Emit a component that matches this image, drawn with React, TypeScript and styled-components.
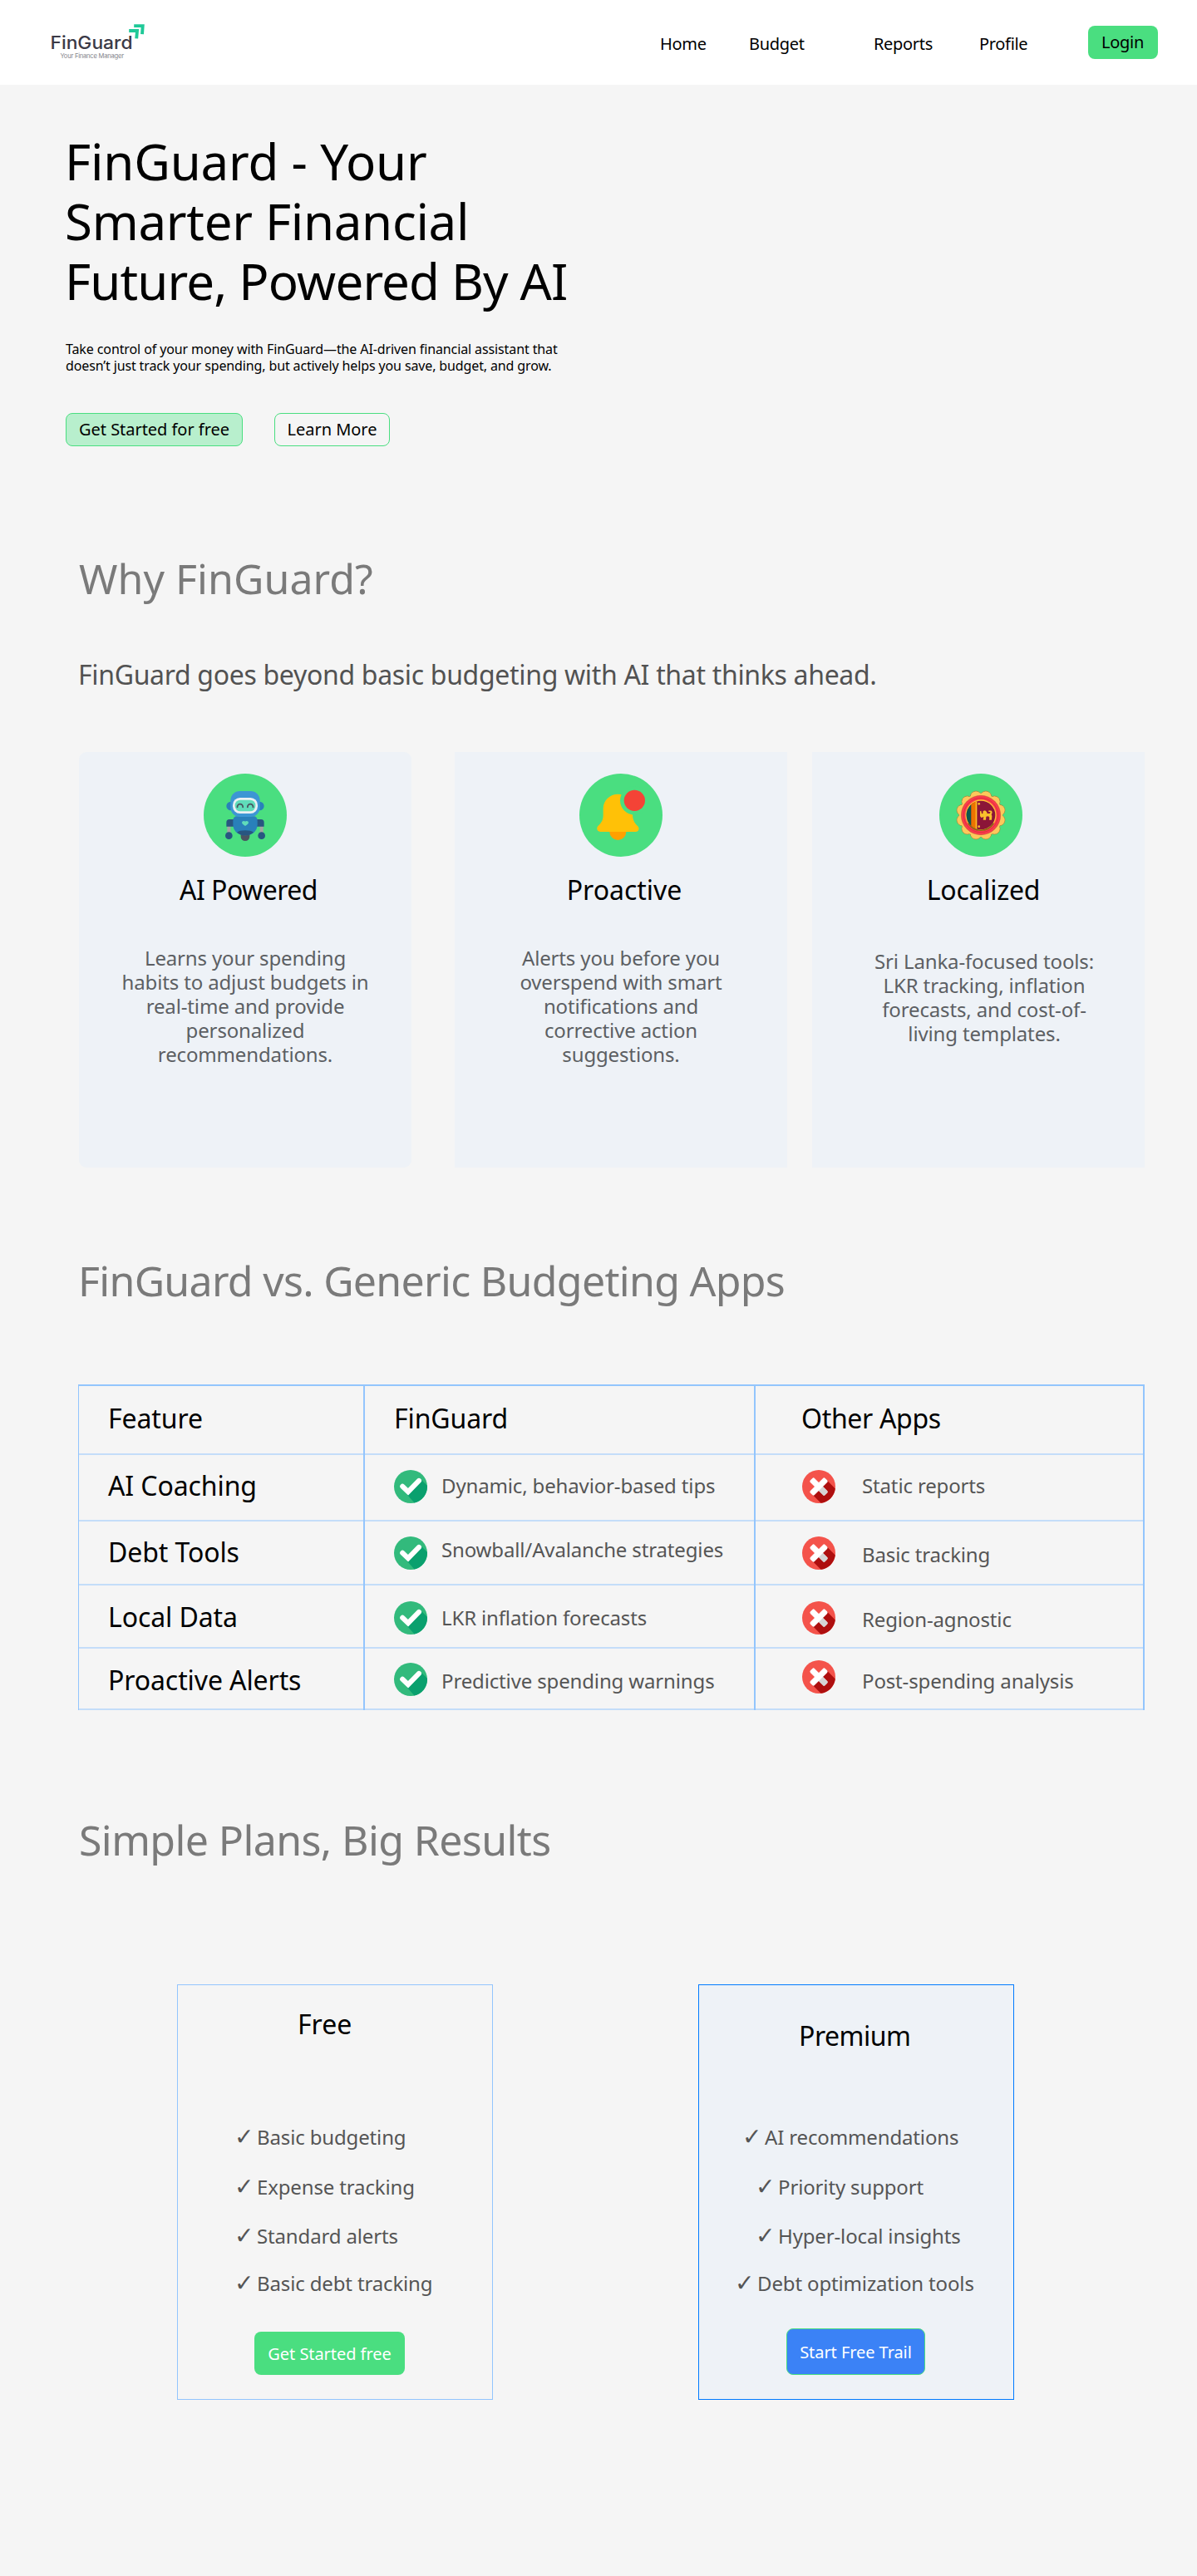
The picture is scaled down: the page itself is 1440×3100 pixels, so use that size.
import React from "react";
import styled, { createGlobalStyle } from "styled-components";

const GlobalStyle = createGlobalStyle`
  *, *::before, *::after { box-sizing: border-box; }
  body {
    margin: 0;
    background: #f5f5f5;
    color: #000;
    font-family: "Noto Sans", "Open Sans", sans-serif;
  }
  h1, h2, h3, p, ul { margin: 0; padding: 0; font-weight: 400; }
  button { font-family: inherit; padding: 0; cursor: pointer; }
`;

const Page = styled.div`
  width: 1440px;
  min-height: 3100px;
  background: #f5f5f5;
`;

/* ---------- header ---------- */

const Header = styled.header`
  display: flex;
  align-items: flex-start;
  height: 102px;
  padding-left: 60px;
  background: #fff;
`;

const Logo = styled.svg`
  display: block;
  flex: none;
  margin-top: 26px;
`;

const Nav = styled.nav`
  display: grid;
  grid-template-columns: 107px 150px 127px 131px;
  margin: 41px 0 0 618px;
`;

const NavLink = styled.a`
  font-size: 20px;
  line-height: 24px;
  letter-spacing: -0.016em;
  color: #000;
`;

const LoginButton = styled.button`
  width: 84px;
  height: 40px;
  margin-top: 31px;
  padding: 0 1px 1px 0;
  border: 0;
  border-radius: 8px;
  background: #4ade80;
  color: #000;
  font-size: 20px;
  letter-spacing: -0.012em;
`;

/* ---------- hero ---------- */

const Hero = styled.section`
  padding: 56px 0 0 79px;
`;

const HeroTitle = styled.h1`
  margin-left: -1px;
  font-size: 60px;
  line-height: 72px;
`;

const Line = styled.span<{ $track?: number }>`
  display: block;
  white-space: nowrap;
  letter-spacing: ${(p) => p.$track ?? 0}em;
`;

const HeroText = styled.p`
  margin-top: 36px;
  font-size: 16px;
  line-height: 20px;
`;

const HeroActions = styled.div`
  display: flex;
  gap: 38px;
  margin-top: 47px;
`;

const HeroButton = styled.button<{ $width: number; $filled?: boolean }>`
  width: ${(p) => p.$width}px;
  height: 40px;
  padding-bottom: 2px;
  border: 1px solid #4ade80;
  border-radius: 8px;
  background: ${(p) => (p.$filled ? "#b8efcd" : "transparent")};
  color: #000;
  font-size: 20px;
  letter-spacing: -0.002em;
`;

/* ---------- shared section text ---------- */

const SectionTitle = styled.h2<{ $top: number; $track: number; $left?: number }>`
  padding-top: ${(p) => p.$top}px;
  margin-left: ${(p) => p.$left ?? 95}px;
  font-size: 50px;
  line-height: 60px;
  letter-spacing: ${(p) => p.$track}em;
  color: #7a7a7a;
`;

const SectionLead = styled.p`
  margin: 66px 0 0 94px;
  font-size: 32px;
  line-height: 40px;
  letter-spacing: -0.01em;
  color: #525252;
`;

/* ---------- feature cards ---------- */

const FeatureRow = styled.div`
  display: flex;
  margin: 73px 0 0 95px;
`;

const FeatureCard = styled.article<{ $gap?: number; $radius?: number }>`
  display: flex;
  flex-direction: column;
  align-items: center;
  width: 400px;
  height: 500px;
  margin-left: ${(p) => p.$gap ?? 0}px;
  padding-top: 26px;
  border-radius: ${(p) => p.$radius ?? 0}px;
  background: #eef2f7;
`;

const IconDisc = styled.div<{ $shift?: number }>`
  width: 100px;
  height: 100px;
  margin-left: ${(p) => (p.$shift ?? 0) * 2}px;
  border-radius: 50%;
  background: #4ade80;
  svg { display: block; }
`;

const FeatureTitle = styled.h3<{ $shift: number; $track: number }>`
  margin-top: 20px;
  margin-left: ${(p) => p.$shift * 2}px;
  font-size: 32px;
  line-height: 40px;
  letter-spacing: ${(p) => p.$track}em;
`;

const FeatureText = styled.p<{ $shift?: number; $top: number }>`
  margin-top: ${(p) => p.$top}px;
  margin-left: ${(p) => (p.$shift ?? 0) * 2}px;
  font-size: 24px;
  line-height: 29.1px;
  text-align: center;
  color: #5c5f63;
`;

/* ---------- comparison table ---------- */

const Table = styled.div`
  width: 1283px;
  margin: 95px 0 0 94px;
  border-top: 2px solid #93c5fd;
  border-left: 1px solid #93c5fd;
`;

const TableRow = styled.div<{ $height: number }>`
  display: grid;
  grid-template-columns: 344px 470px 468px;
  height: ${(p) => p.$height}px;
`;

const Cell = styled.div<{ $left: number }>`
  display: flex;
  align-items: flex-start;
  padding-left: ${(p) => p.$left}px;
  border-right: 2px solid #93c5fd;
  box-shadow: inset 0 -2px 0 #c4ddf9;
`;

const CellLabel = styled.span<{ $top: number; $track?: number }>`
  margin-top: ${(p) => p.$top}px;
  font-size: 32px;
  line-height: 40px;
  letter-spacing: ${(p) => p.$track ?? -0.003}em;
`;

const CellIcon = styled.svg<{ $top: number }>`
  flex: none;
  margin-top: ${(p) => p.$top}px;
`;

const CellText = styled.span<{ $top: number; $gap: number }>`
  margin-top: ${(p) => p.$top}px;
  margin-left: ${(p) => p.$gap}px;
  font-size: 24px;
  line-height: 30px;
  letter-spacing: -0.006em;
  white-space: nowrap;
  color: #555;
`;

/* ---------- plans ---------- */

const PlanRow = styled.div`
  display: flex;
  gap: 247px;
  margin: 144px 0 0 213px;
`;

const PlanCard = styled.article<{ $premium?: boolean }>`
  display: flex;
  flex-direction: column;
  align-items: flex-start;
  width: 380px;
  height: 500px;
  border: 1px solid ${(p) => (p.$premium ? "#007aff" : "#93c5fd")};
  background: ${(p) => (p.$premium ? "#eef2f7" : "transparent")};
`;

const PlanTitle = styled.h3<{ $top: number; $left: number; $track?: number }>`
  margin: ${(p) => p.$top}px 0 0 ${(p) => p.$left}px;
  font-size: 32px;
  line-height: 40px;
  letter-spacing: ${(p) => p.$track ?? 0}em;
`;

const PlanList = styled.ul<{ $top: number }>`
  display: grid;
  grid-template-rows: 60px 59px 57px 30px;
  margin-top: ${(p) => p.$top}px;
  list-style: none;
`;

const PlanItem = styled.li<{ $left: number }>`
  display: flex;
  padding-left: ${(p) => p.$left}px;
  font-size: 24px;
  line-height: 30px;
  letter-spacing: -0.006em;
  white-space: nowrap;
  color: #555;
`;

const Tick = styled.span`
  width: 27px;
  font-family: "DejaVu Sans", sans-serif;
  font-size: 28px;
`;

const PlanButton = styled.button<{ $premium?: boolean }>`
  width: ${(p) => (p.$premium ? 167 : 181)}px;
  height: ${(p) => (p.$premium ? 56 : 52)}px;
  margin: ${(p) => (p.$premium ? "39px 0 0 105px" : "43px 0 0 92px")};
  border: ${(p) => (p.$premium ? "1px solid #4ade80" : "0")};
  border-radius: 8px;
  background: ${(p) => (p.$premium ? "#3b82f6" : "#4ade80")};
  color: #fff;
  font-size: 20px;
  letter-spacing: -0.003em;
`;

/* ---------- drawings ---------- */

const FinGuardLogo = () => (
  <Logo width="116" height="50" viewBox="60 26 116 50">
    <text x="60.5" y="59" fontSize="21.6" fontWeight="500" fontFamily="Inter, sans-serif" fill="#3b3a47" textLength="99" lengthAdjust="spacingAndGlyphs">
      FinGuard
    </text>
    <text x="72.5" y="70" fontSize="7.6" fontFamily="Inter, sans-serif" fill="#85858b" textLength="76.5">
      Your Finance Manager
    </text>
    <g fill="none" stroke="#1fc998" strokeWidth="3.9" strokeLinejoin="miter" strokeLinecap="butt">
      <path d="M161.2 31.100H171.700L171 41.200" />
      <path d="M155.200 37H165L164.200 46.400" />
    </g>
  </Logo>
);

const RobotIcon = () => (
  <svg width="100" height="100" viewBox="0 0 300 300">
    <circle cx="98" cy="117" r="16" fill="#2980ba" />
    <circle cx="202" cy="117" r="16" fill="#2980ba" />
    <rect x="85" y="187" width="12" height="30" fill="#a5a5a4" />
    <rect x="203" y="187" width="12" height="30" fill="#a5a5a4" />
    <path d="M110 165H93a11 11 0 0 0-11 11v15h28zM190 165h17a11 11 0 0 1 11 11v15h-28z" fill="#285680" />
    <circle cx="91" cy="224" r="13" fill="#285680" />
    <circle cx="209" cy="224" r="13" fill="#285680" />
    <path d="M134 214h32v13a16 16 0 0 1-32 0z" fill="#4b5460" />
    <path d="M122 154h56q16 0 16 16v14q0 20-16 31-12 8-28 8t-28-8q-16-11-16-31v-14q0-16 16-16z" fill="#2980ba" />
    <path d="M120 212q10-7 30-7t30 7q-12 11-30 11t-30-11z" fill="#285680" />
    <rect x="97" y="63" width="106" height="93" rx="34" fill="#3c96d4" />
    <rect x="105" y="87" width="90" height="57" rx="26" fill="#ebf0f3" />
    <rect x="113" y="95" width="74" height="41" rx="19" fill="#60dcba" />
    <path d="M121.500 121a10 11 0 0 1 20 0M158.500 121a10 11 0 0 1 20 0" fill="none" stroke="#4b5460" strokeWidth="5.500" strokeLinecap="round" />
    <path d="M145 171q5 0 5 3 0-3 5-3 7 0 7 6 0 4-12 12-12-8-12-12 0-6 7-6z" fill="#60dcba" />
  </svg>
);

const BellIcon = () => (
  <svg width="100" height="100" viewBox="0 0 300 300">
    <circle cx="139" cy="210" r="30" fill="#ffa000" />
    <path
      d="M139 74C110 74 86 97 86 126V150C86 170 77 180 68 188C60 196 63 210 76 210H202C215 210 218 196 210 189C200 180 192 168 192 148V126C192 97 168 74 139 74Z"
      fill="#ffc107"
    />
    <circle cx="199" cy="97" r="52" fill="#4ade80" />
    <circle cx="199" cy="97" r="38" fill="#f44336" />
  </svg>
);

const petals = Array.from({ length: 12 }, (_, i) => {
  const a = ((i * 30 + 15) * Math.PI) / 180;
  return { x: 150 + 69 * Math.cos(a), y: 150 + 69 * Math.sin(a) };
});

const SriLankaIcon = () => (
  <svg width="100" height="100" viewBox="0 0 300 300">
    <defs>
      <clipPath id="flag">
        <circle cx="150" cy="150" r="52" />
      </clipPath>
    </defs>
    {petals.map((p, i) => (
      <circle key={i} cx={p.x} cy={p.y} r="20" fill="#fdc85c" stroke="#a08a3c" strokeWidth="3" />
    ))}
    {petals.map((p, i) => (
      <circle key={i} cx={p.x} cy={p.y} r="19" fill="#fdc85c" />
    ))}
    <circle cx="150" cy="150" r="78" fill="#fdc85c" />
    <circle cx="150" cy="150" r="71" fill="#fb3a4c" stroke="#b8532f" strokeWidth="1.500" />
    <circle cx="150" cy="150" r="62" fill="none" stroke="#e0303f" strokeWidth="3" />
    <circle cx="150" cy="150" r="56" fill="#ffc233" />
    <g clipPath="url(#flag)">
      <rect x="96" y="96" width="108" height="108" fill="#8b1538" />
      <rect x="96" y="96" width="19" height="108" fill="#0b5a50" />
      <rect x="115" y="96" width="17" height="108" fill="#eb7400" />
      <rect x="131" y="96" width="5" height="108" fill="#ffbe29" />
      <path d="M147 136l4-2 2 11 4-1 1-9 7-2 6 5 2 6h9l3-5-8-2 2-4 10 1 2 7-3 6 2 6-1 14h-9l1-9-4-4-8 1-1 12h-10l2-11-8 3-5-5z" fill="#f9c02c" />
      <circle cx="143" cy="109" r="4" fill="#f9c02c" />
      <circle cx="143" cy="191" r="4" fill="#f9c02c" />
    </g>
    <path d="M104 179a54 54 0 0 0 92 0" fill="none" stroke="#8a6312" strokeWidth="5" />
  </svg>
);

const CheckIcon = ({ top }: { top: number }) => (
  <CellIcon $top={top} width="40" height="40" viewBox="0 0 40 40">
    <circle cx="20" cy="20" r="20" fill="#32ba7c" />
    <path d="M32.500 11.500L39.950 18.700A20 20 0 0 1 24.500 39.500L16 30Z" fill="#0aa06e" />
    <path d="M10.200 19.800L17 26.200L30 12.900" fill="none" stroke="#fff" strokeWidth="6" strokeLinecap="round" strokeLinejoin="miter" />
  </CellIcon>
);

const CrossIcon = ({ top }: { top: number }) => (
  <CellIcon $top={top} width="40" height="40" viewBox="0 0 40 40">
    <circle cx="20" cy="20" r="20" fill="#f4534b" />
    <path d="M29.500 12L39.800 22.600A20 20 0 0 1 22.500 39.850L12 29.300Z" fill="#ae0f0f" />
    <rect x="7.500" y="16.500" width="25" height="7" rx="1.800" transform="rotate(45 20 20)" fill="#fff" />
    <path d="M20 20L22.500 17.500L30.200 25.200Q31.200 26.300 30.200 27.300L27.300 30.200Q26.300 31.200 25.200 30.200L17.500 22.500Z" fill="#d5d5d5" />
    <rect x="7.500" y="16.500" width="25" height="7" rx="1.800" transform="rotate(-45 20 20)" fill="#fff" />
  </CellIcon>
);

/* ---------- data ---------- */

const rows = [
  { h: 80, label: "AI Coaching", lTop: 17, good: "Dynamic, behavior-based tips", gi: 18, gt: 22, bad: "Static reports", bi: 18, bt: 22 },
  { h: 77, label: "Debt Tools", lTop: 17, good: "Snowball/Avalanche strategies", gi: 18, gt: 19, bad: "Basic tracking", bi: 18, bt: 25 },
  { h: 76, label: "Local Data", lTop: 18, good: "LKR inflation forecasts", gi: 19, gt: 24, bad: "Region-agnostic", bi: 19, bt: 26 },
  { h: 74, label: "Proactive Alerts", lTop: 18, good: "Predictive spending warnings", gi: 17, gt: 24, bad: "Post-spending analysis", bi: 14, bt: 24 },
];

const freeItems = [
  { text: "Basic budgeting", left: 68 },
  { text: "Expense tracking", left: 68 },
  { text: "Standard alerts", left: 68 },
  { text: "Basic debt tracking", left: 68 },
];

const premiumItems = [
  { text: "AI recommendations", left: 52 },
  { text: "Priority support", left: 68 },
  { text: "Hyper-local insights", left: 68 },
  { text: "Debt optimization tools", left: 43 },
];

const Lines = ({ of }: { of: string[] }) => (
  <>
    {of.map((l) => (
      <Line key={l} $track={-0.006}>{l}</Line>
    ))}
  </>
);

export default function App() {
  return (
    <Page>
      <GlobalStyle />
      <Header>
        <FinGuardLogo />
        <Nav>
          <NavLink>Home</NavLink>
          <NavLink>Budget</NavLink>
          <NavLink>Reports</NavLink>
          <NavLink>Profile</NavLink>
        </Nav>
        <LoginButton>Login</LoginButton>
      </Header>

      <Hero>
        <HeroTitle>
          <Line $track={-0.003}>FinGuard - Your</Line>
          <Line $track={-0.005}>Smarter Financial</Line>
          <Line $track={-0.014}>Future, Powered By AI</Line>
        </HeroTitle>
        <HeroText>
          <Line $track={-0.007}>Take control of your money with FinGuard—the AI-driven financial assistant that</Line>
          <Line $track={-0.008}>doesn’t just track your spending, but actively helps you save, budget, and grow.</Line>
        </HeroText>
        <HeroActions>
          <HeroButton $width={213} $filled>Get Started for free</HeroButton>
          <HeroButton $width={139}>Learn More</HeroButton>
        </HeroActions>
      </Hero>

      <section>
        <SectionTitle $top={129} $track={0.001}>Why FinGuard?</SectionTitle>
        <SectionLead>FinGuard goes beyond basic budgeting with AI that thinks ahead.</SectionLead>
        <FeatureRow>
          <FeatureCard $radius={9}>
            <IconDisc><RobotIcon /></IconDisc>
            <FeatureTitle $shift={4} $track={-0.016}>AI Powered</FeatureTitle>
            <FeatureText $top={47}>
              <Lines of={["Learns your spending", "habits to adjust budgets in", "real-time and provide", "personalized", "recommendations."]} />
            </FeatureText>
          </FeatureCard>
          <FeatureCard $gap={52}>
            <IconDisc><BellIcon /></IconDisc>
            <FeatureTitle $shift={4} $track={-0.001}>Proactive</FeatureTitle>
            <FeatureText $top={47}>
              <Lines of={["Alerts you before you", "overspend with smart", "notifications and", "corrective action", "suggestions."]} />
            </FeatureText>
          </FeatureCard>
          <FeatureCard $gap={30}>
            <IconDisc $shift={3}><SriLankaIcon /></IconDisc>
            <FeatureTitle $shift={6} $track={-0.008}>Localized</FeatureTitle>
            <FeatureText $top={51} $shift={7}>
              <Lines of={["Sri Lanka-focused tools:", "LKR tracking, inflation", "forecasts, and cost-of-", "living templates."]} />
            </FeatureText>
          </FeatureCard>
        </FeatureRow>
      </section>

      <section>
        <SectionTitle $top={106} $track={-0.014} $left={94}>FinGuard vs. Generic Budgeting Apps</SectionTitle>
        <Table>
          <TableRow $height={83}>
            <Cell $left={35}><CellLabel $top={19}>Feature</CellLabel></Cell>
            <Cell $left={35}><CellLabel $top={19}>FinGuard</CellLabel></Cell>
            <Cell $left={55}><CellLabel $top={19} $track={-0.01}>Other Apps</CellLabel></Cell>
          </TableRow>
          {rows.map((r) => (
            <TableRow key={r.label} $height={r.h}>
              <Cell $left={35}><CellLabel $top={r.lTop}>{r.label}</CellLabel></Cell>
              <Cell $left={35}>
                <CheckIcon top={r.gi} />
                <CellText $top={r.gt} $gap={17}>{r.good}</CellText>
              </Cell>
              <Cell $left={56}>
                <CrossIcon top={r.bi} />
                <CellText $top={r.bt} $gap={32}>{r.bad}</CellText>
              </Cell>
            </TableRow>
          ))}
        </Table>
      </section>

      <section>
        <SectionTitle $top={126} $track={-0.012}>Simple Plans, Big Results</SectionTitle>
        <PlanRow>
          <PlanCard>
            <PlanTitle $top={27} $left={144}>Free</PlanTitle>
            <PlanList $top={101}>
              {freeItems.map((i) => (
                <PlanItem key={i.text} $left={i.left}><Tick>✓</Tick>{i.text}</PlanItem>
              ))}
            </PlanList>
            <PlanButton>Get Started free</PlanButton>
          </PlanCard>
          <PlanCard $premium>
            <PlanTitle $top={41} $left={120} $track={-0.015}>Premium</PlanTitle>
            <PlanList $top={87}>
              {premiumItems.map((i) => (
                <PlanItem key={i.text} $left={i.left}><Tick>✓</Tick>{i.text}</PlanItem>
              ))}
            </PlanList>
            <PlanButton $premium>Start Free Trail</PlanButton>
          </PlanCard>
        </PlanRow>
      </section>
    </Page>
  );
}
